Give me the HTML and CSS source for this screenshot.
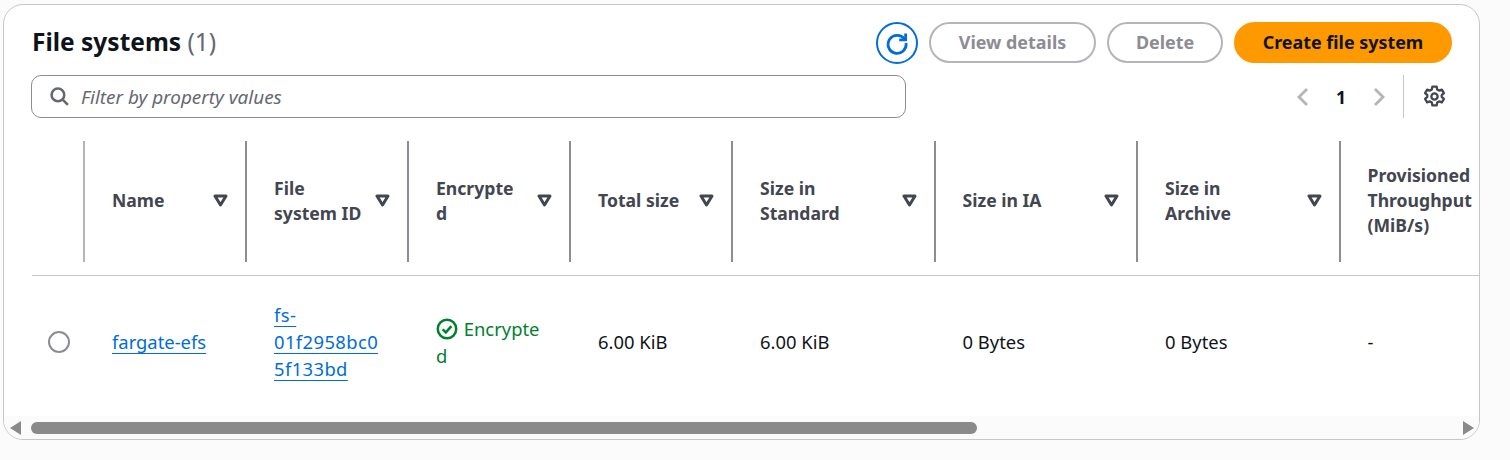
FILE: index.html
```html
<!DOCTYPE html>
<html>
<head>
  <meta charset="utf-8">
  <title>File systems</title>
  <link rel="stylesheet" href="styles.css">
</head>
<body>
  <div class="card">
    <div class="top">
      <h2 class="title">File systems <span class="count">(1)</span></h2>
      <div class="actions">
        <button class="btn-refresh" aria-label="Refresh">
          <svg width="24" height="24" viewBox="0 0 24 24" fill="none" stroke="#006ce0" stroke-width="2.8"><path d="M19.5 8.2A9 9 0 1 0 21 12"/><path d="M20.6 2.4v6.4h-6.4"/></svg>
        </button>
        <button class="btn btn-details" disabled>View details</button>
        <button class="btn btn-delete" disabled>Delete</button>
        <button class="btn btn-create">Create file system</button>
      </div>
    </div>

    <div class="tools">
      <div class="filter">
        <svg width="19" height="19" viewBox="0 0 18 18" fill="none" stroke="#656871" stroke-width="2.4"><circle cx="7.5" cy="7.5" r="6"/><path d="M12 12l5 5"/></svg>
        <span class="filter-text">Filter by property values</span>
      </div>
      <div class="pager">
        <svg width="14" height="20" viewBox="0 0 14 20" fill="none" stroke="#b4b4bb" stroke-width="2.8"><path d="M11 2L3 10l8 8"/></svg>
        <span class="page">1</span>
        <svg width="14" height="20" viewBox="0 0 14 20" fill="none" stroke="#b4b4bb" stroke-width="2.8"><path d="M3 2l8 8-8 8"/></svg>
      </div>
      <div class="settings">
        <svg width="23" height="23" viewBox="0 0 22 22" fill="none" stroke="#424650" stroke-width="2.2" stroke-linejoin="round"><circle cx="11" cy="11" r="3"/><path d="M9 1.5h4l.6 2.8 1.7 1 2.7-.9 2 3.4-2.1 1.9v1.6l2.1 1.9-2 3.4-2.7-.9-1.7 1-.6 2.8H9l-.6-2.8-1.7-1-2.7.9-2-3.4 2.1-1.9v-1.6L2 7.8l2-3.4 2.7.9 1.7-1z"/></svg>
      </div>
    </div>

    <div class="table-wrap">
      <table class="fs-table">
        <colgroup>
          <col class="col-select"><col class="col-s"><col class="col-s"><col class="col-s"><col class="col-s"><col class="col-l"><col class="col-l"><col class="col-l">
        </colgroup>
        <thead>
          <tr>
            <th></th>
            <th><div class="head first"><span>Name</span><svg class="sort" width="15" height="13" viewBox="0 0 15 13"><path d="M2 2h11L7.5 11z" fill="#fff" stroke="#424650" stroke-width="3" stroke-linejoin="round"/></svg></div></th>
            <th><div class="head"><span>File<br>system ID</span><svg class="sort" width="15" height="13" viewBox="0 0 15 13"><path d="M2 2h11L7.5 11z" fill="#fff" stroke="#424650" stroke-width="3" stroke-linejoin="round"/></svg></div></th>
            <th><div class="head"><span>Encrypte<br>d</span><svg class="sort" width="15" height="13" viewBox="0 0 15 13"><path d="M2 2h11L7.5 11z" fill="#fff" stroke="#424650" stroke-width="3" stroke-linejoin="round"/></svg></div></th>
            <th><div class="head"><span>Total size</span><svg class="sort" width="15" height="13" viewBox="0 0 15 13"><path d="M2 2h11L7.5 11z" fill="#fff" stroke="#424650" stroke-width="3" stroke-linejoin="round"/></svg></div></th>
            <th><div class="head"><span>Size in<br>Standard</span><svg class="sort" width="15" height="13" viewBox="0 0 15 13"><path d="M2 2h11L7.5 11z" fill="#fff" stroke="#424650" stroke-width="3" stroke-linejoin="round"/></svg></div></th>
            <th><div class="head"><span>Size in IA</span><svg class="sort" width="15" height="13" viewBox="0 0 15 13"><path d="M2 2h11L7.5 11z" fill="#fff" stroke="#424650" stroke-width="3" stroke-linejoin="round"/></svg></div></th>
            <th><div class="head"><span>Size in<br>Archive</span><svg class="sort" width="15" height="13" viewBox="0 0 15 13"><path d="M2 2h11L7.5 11z" fill="#fff" stroke="#424650" stroke-width="3" stroke-linejoin="round"/></svg></div></th>
            <th><div class="head"><span>Provisioned<br>Throughput<br>(MiB/s)</span></div></th>
          </tr>
        </thead>
        <tbody>
          <tr>
            <td class="select-cell"><span class="radio"></span></td>
            <td><a href="#">fargate-efs</a></td>
            <td class="fs-id"><a href="#">fs-</a><br><a href="#">01f2958bc0</a><br><a href="#">5f133bd</a></td>
            <td class="status">
              <svg width="22" height="22" viewBox="0 0 21 21" fill="none" stroke="#00802f" stroke-width="2.4"><circle cx="10.5" cy="10.5" r="8.8"/><path d="M6.3 10.8l3.1 3 5.3-6"/></svg>
              Encrypte<br>d
            </td>
            <td>6.00 KiB</td>
            <td>6.00 KiB</td>
            <td>0 Bytes</td>
            <td>0 Bytes</td>
            <td>-</td>
          </tr>
        </tbody>
      </table>
    </div>

    <div class="scrollbar">
      <i class="arrow arrow-left"></i>
      <div class="track"><div class="thumb"></div></div>
      <i class="arrow arrow-right"></i>
    </div>
  </div>
</body>
</html>
```

FILE: styles.css
```css
html, body {margin:0; padding:0; background:#fbfbfb;}
body {font-family:"Noto Sans",sans-serif; font-size:18.4px; color:#0f141a; height:460px; overflow:hidden;}

.card {box-sizing:border-box; width:1477px; height:436px; margin:4px 0 0 3px; background:#fff; border:1px solid #c6c6cd; border-radius:20px; overflow:hidden; display:flex; flex-direction:column;}

.top {display:flex; justify-content:space-between; align-items:flex-start; height:41px; margin-top:17px; padding:0 27px 0 28px;}
.title {margin:-1px 0 0; font-size:24.5px; line-height:41px; font-weight:700;}
.count {font-weight:400; color:#656871;}

.actions {display:flex; gap:11px; align-items:flex-start;}
.btn-refresh {box-sizing:border-box; width:42px; height:42px; padding:0; border:2px solid #006ce0; border-radius:50%; background:#fff; display:flex; align-items:center; justify-content:center;}
.btn {box-sizing:border-box; height:41px; border-radius:21px; border:2px solid #b4b4bb; background:#fff; font-family:inherit; font-size:17.9px; font-weight:700; color:#8c8c94; padding:0 0 2px;}
.btn-details {width:167px;}
.btn-delete {width:116px;}
.btn-create {width:218px; background:#ff9900; border-color:#ff9900; color:#0f141a;}

.tools {display:flex; align-items:center; height:43px; margin-top:12px; padding-left:27px;}
.filter {box-sizing:border-box; width:875px; height:43px; border:1px solid #8c8c94; border-radius:10px; display:flex; align-items:center; gap:12px; padding-left:18px;}
.filter-text {font-style:italic; color:#656871; font-size:18.9px;}
.pager {display:flex; align-items:center; margin-left:390px; width:90px; justify-content:space-between;}
.page {font-size:17.6px; font-weight:700;}
.settings {height:43px; margin-left:17px; padding-left:19px; border-left:1px solid #c6c6cd; display:flex; align-items:center;}

.table-wrap {flex:1; overflow:hidden; margin-left:28px; margin-top:23px;}
.fs-table {border-collapse:collapse; table-layout:fixed; width:1611px;}
.col-select {width:51px;}
.col-s {width:162px;}
.col-l {width:202.5px;}
.fs-table th {padding:0 0 13px; border-bottom:1px solid #c6c6cd; font-size:17.6px; font-weight:700; color:#424650; text-align:left;}
.head {box-sizing:border-box; height:121px; border-left:2px solid #8c8c94; padding:0 17px 2px 27px; display:flex; align-items:center; justify-content:space-between; line-height:25px; white-space:nowrap;}
.head.first {border-left-color:#b4b4bb;}
.sort {flex:none;}

.fs-table td {height:131px; padding:0 0 0 29px; line-height:27px; vertical-align:middle; color:#0f141a;}
.fs-table a {color:#006ce0; text-decoration:underline; text-underline-offset:4px;}
.fs-id {letter-spacing:.4px;}
.select-cell.select-cell {padding-left:16px;}
.radio {display:block; box-sizing:border-box; width:22px; height:22px; border:2px solid #8c8c94; border-radius:50%;}
.status.status {color:#00802f;}
.status svg {vertical-align:-4px; margin-right:1px;}

.scrollbar {height:23px; background:#fbfbfb; display:flex; align-items:center; padding:0 5px 0 6px;}
.track {flex:1; height:12px; padding:0 10px;}
.thumb {width:946px; height:12px; background:#8a8a8a; border-radius:6px;}
.arrow {width:0; height:0; border-top:7px solid transparent; border-bottom:7px solid transparent;}
.arrow-left {border-right:11px solid #8a8a8a;}
.arrow-right {border-left:11px solid #8a8a8a;}
```
